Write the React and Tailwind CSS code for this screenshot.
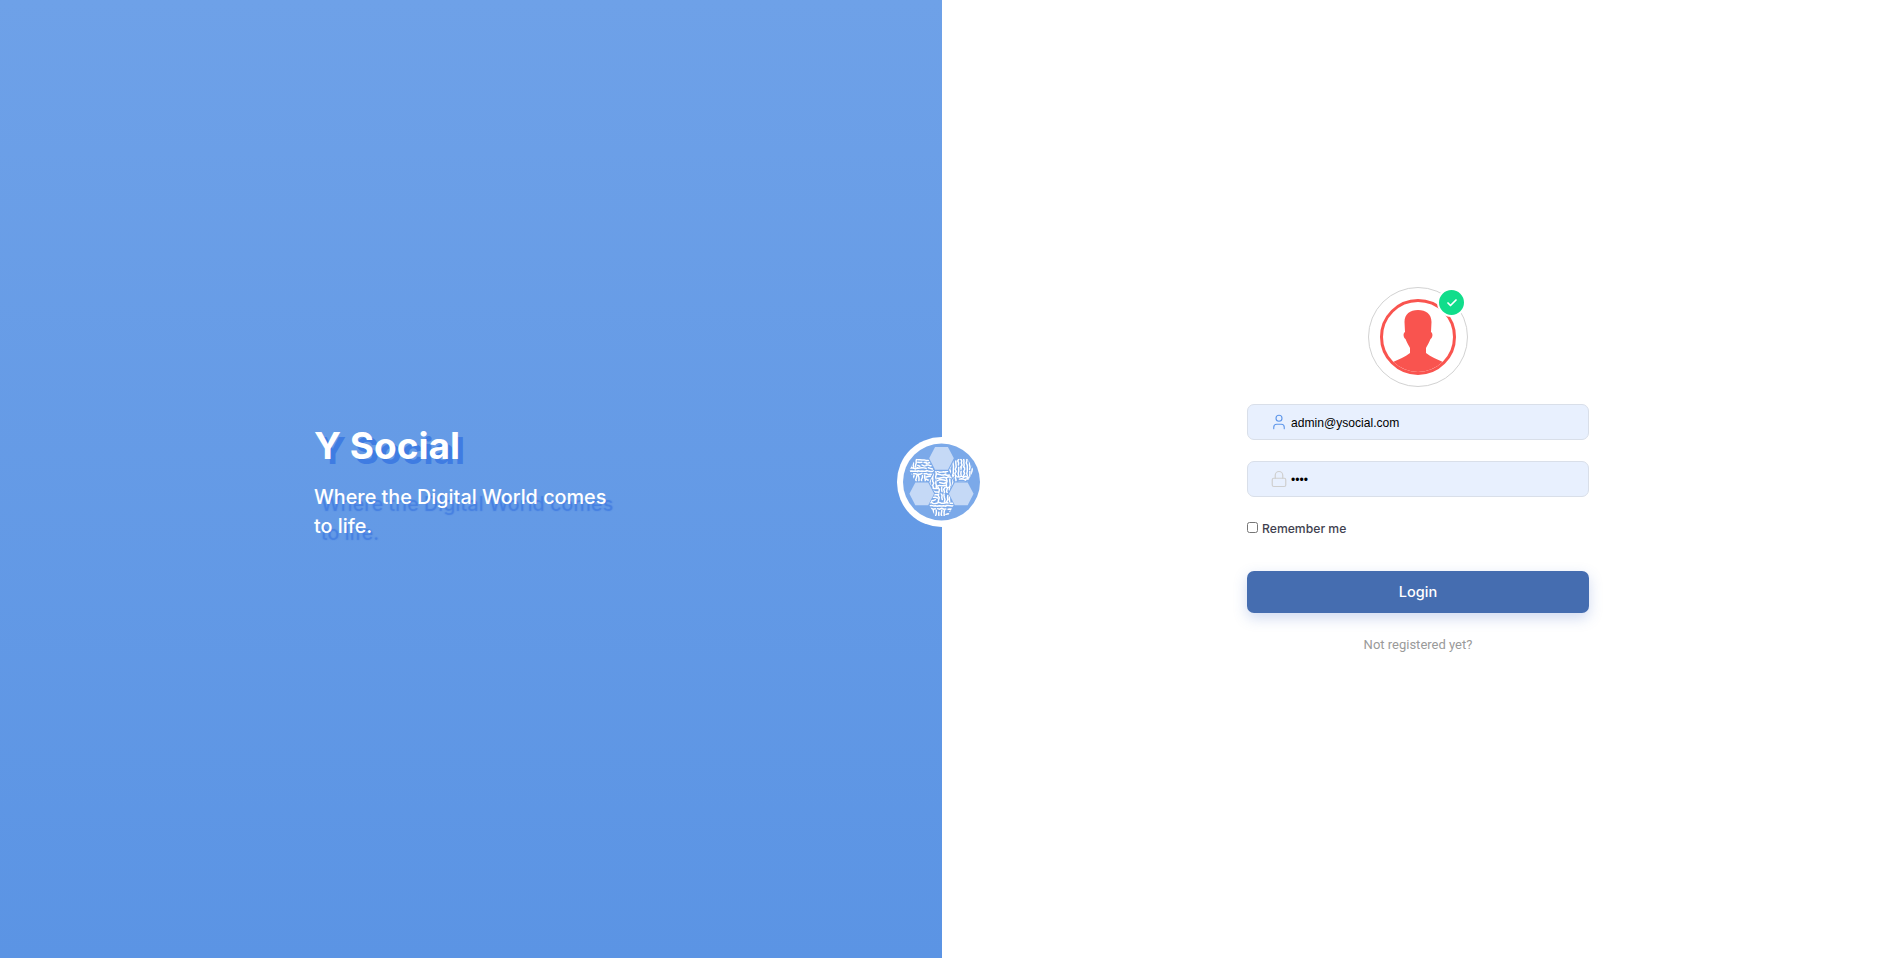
import { Lock, User, Check } from "lucide-react";

const HEXES = [
  { x: 26.5, y: 3.5, maze: false },
  { x: 6.5, y: 15.5, maze: true },
  { x: 46.5, y: 15.5, maze: true },
  { x: 26.5, y: 27.5, maze: true },
  { x: 6.5, y: 39.5, maze: false },
  { x: 46.5, y: 39.5, maze: false },
  { x: 26.5, y: 50.5, maze: true },
];

// wobbly stripes in patches, gives the coral look inside the hexagons
function mazePath(seed) {
  let s = seed;
  const next = () => {
    s = (s * 48271) % 2147483647;
    return s / 2147483647;
  };
  for (let i = 0; i < 8; i++) next();
  const patch = 8.5;
  const gap = 2.85;
  let d = "";
  for (let py = 0; py < 3; py++) {
    for (let px = 0; px < 3; px++) {
      const flip = next() > 0.5;
      const ox = px * patch;
      const oy = py * patch;
      for (let k = 0; k < 3; k++) {
        let pen = false;
        for (let a = 0; a <= patch; a += 2.1) {
          const w = k * gap + 1.2 + (next() - 0.5) * 1.5;
          const x = ox + (flip ? a : w);
          const y = oy + (flip ? w : a);
          d += `${pen ? "L" : "M"}${x.toFixed(1)} ${y.toFixed(1)}`;
          pen = next() > 0.1;
        }
      }
    }
  }
  return d;
}

function Logo() {
  return (
    <div className="absolute left-[897px] top-[437px] w-[89px] h-[90px] rounded-full bg-white p-[6px]">
      <svg viewBox="0 0 78 78" className="w-full h-full">
        <circle cx="39" cy="39" r="39" fill="#7ba9e9" />
        {HEXES.map((h, i) => (
          <g key={i} transform={`translate(${h.x} ${h.y})`}>
            <clipPath id={`hex-${i}`}>
              <polygon points="6,0 19,0 25,11.5 19,23 6,23 0,11.5" />
            </clipPath>
            {!h.maze && <polygon points="6,0 19,0 25,11.5 19,23 6,23 0,11.5" fill="#c5d9f6" />}
            {h.maze && (
              <path
                d={mazePath(i * 977 + 131)}
                clipPath={`url(#hex-${i})`}
                fill="none"
                stroke="#fff"
                strokeWidth="1.5"
                strokeLinecap="round"
                strokeLinejoin="round"
              />
            )}
          </g>
        ))}
      </svg>
    </div>
  );
}

function Avatar() {
  return (
    <div className="relative w-[100px] h-[100px] rounded-full border border-[#d2d2d2] flex items-center justify-center">
      <div className="w-[76px] h-[76px] rounded-full border-[3px] border-[#f9544f] overflow-hidden">
        <svg viewBox="0 0 70 70" className="w-full h-full">
          <path
            d="M21.500 20C21.500 12 27 8 35 8C43 8 48.500 12 48.500 20L48 30C50 31 50 35 47.500 37C46 41 44 44 43 46L43 51C48 55 54 57 60 60L60 72L10 72L10 60C16 57 22 55 27 51L27 46C26 44 24 41 22.500 37C20 35 20 31 22 30Z"
            fill="#f9544f"
          />
        </svg>
      </div>
      <div className="absolute right-[1px] top-0 w-[29px] h-[29px] rounded-full bg-[#11dd8b] border-2 border-white flex items-center justify-center text-white">
        <Check size={12} strokeWidth={3.5} />
      </div>
    </div>
  );
}

function Field({ icon, type, value }) {
  return (
    <div className="flex items-center h-[36px] rounded-[7px] border border-[#d9dfe9] bg-[#e8f0fe] pl-[22px]">
      {icon}
      <input
        readOnly
        type={type}
        value={value}
        className="ml-[3px] pt-[2px] flex-1 bg-transparent outline-none text-[12.100px] text-black font-['Liberation_Sans',sans-serif]"
      />
    </div>
  );
}

export default function App() {
  return (
    <div className="relative flex h-screen overflow-hidden bg-white">
      {/* Panel izquierdo */}
      <div className="w-[942px] flex flex-col justify-center pl-[314px] pt-[7px] bg-gradient-to-b from-[#6ea1e8] to-[#5b94e4] text-white font-['Inter',sans-serif]">
        <h1 className="text-[37px] leading-[44px] font-bold [text-shadow:5px_5px_0_#3f7ce2]">Y Social</h1>
        <p className="mt-[15px] w-[300px] text-[19.800px] leading-[29px] font-medium [text-shadow:7px_7px_1px_rgba(61,120,224,0.8)]">
          Where the Digital World comes to life.
        </p>
      </div>

      <Logo />

      {/* Formulario */}
      <div className="flex-1 flex justify-center pl-[9px] pt-[287px]">
        <div className="w-[342px] flex flex-col font-['Inter',sans-serif]">
          <div className="flex justify-center mb-[17px]">
            <Avatar />
          </div>
          <Field icon={<User size={18} strokeWidth={1.5} className="text-[#5f97ea]" />} type="text" value="admin@ysocial.com" />
          <div className="mt-[21px]">
            <Field icon={<Lock size={18} strokeWidth={1.6} className="text-[#cfcfcf]" />} type="password" value="1234" />
          </div>
          <label className="mt-[23px] flex items-center gap-[4px] text-[12.200px] leading-[18px] font-medium text-[#3f3f4f]">
            <input type="checkbox" className="w-[11px] h-[11px] mb-[3px]" />
            Remember me
          </label>
          <button className="mt-[33px] h-[42px] rounded-[7px] bg-[#456db0] text-white text-[14.500px] font-medium shadow-[0_5px_14px_rgba(69,109,200,0.25)]">
            Login
          </button>
          <p className="mt-[22px] text-center text-[13px] leading-[20px] text-[#9a9a9a] font-['Roboto',sans-serif]">
            Not registered yet?
          </p>
        </div>
      </div>
    </div>
  );
}
